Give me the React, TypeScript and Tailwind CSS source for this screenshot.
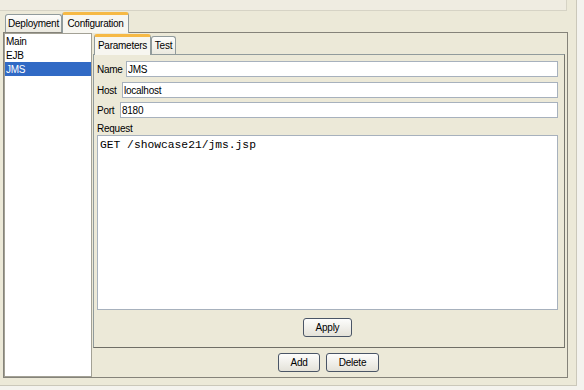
const Tab = ({
  label,
  selected,
  className = "",
}: {
  label: string;
  selected?: boolean;
  className?: string;
}) =>
  selected ? (
    <div
      className={`relative z-10 -mb-px flex h-[21px] items-center justify-center rounded-t-[3px] border-x border-t-[3px] border-x-[#919b9c] border-t-[#f6b945] bg-[#f7f6f0] px-[5px] pb-[2px] ${className}`}
    >
      {label}
    </div>
  ) : (
    <div
      className={`flex h-[18px] items-center justify-center rounded-t-[3px] border border-b-0 border-[#919b9c] bg-gradient-to-b from-[#fdfdfb] to-[#ebe9df] px-[4px] ${className}`}
    >
      {label}
    </div>
  );

const Button = ({ label, className = "" }: { label: string; className?: string }) => (
  <button
    className={`flex h-[19px] items-center justify-center rounded-[3px] border border-[#4a5566] bg-gradient-to-b from-[#fdfdfc] to-[#e4e2d9] ${className}`}
  >
    {label}
  </button>
);

const Field = ({
  label,
  value,
  labelWidth,
  className = "",
}: {
  label: string;
  value: string;
  labelWidth: string;
  className?: string;
}) => (
  <div className={`flex h-[16px] items-center ${className}`}>
    <span className={labelWidth}>{label}</span>
    <input
      readOnly
      value={value}
      className="h-[16px] flex-1 border border-[#a7b1bd] bg-white px-px text-[10px] tracking-[-0.25px] outline-none"
    />
  </div>
);

const items = ["Main", "EJB", "JMS"];

export default function App() {
  return (
    <div className="h-[390px] w-[584px] overflow-hidden bg-[#f4f3ee] font-['Liberation_Sans',Arial,sans-serif] text-[10px] tracking-[-0.25px] text-black">
      <div className="flex h-[386px] w-[577px] flex-col border-r border-b border-[#cbc8ba] bg-[#ece9d8]">
        <div className="h-[11px] w-[567px] shrink-0 border-r border-b border-[#d6d3c5] bg-[#efece1]" />

        <div className="flex h-[21px] shrink-0 items-end pl-[5px]">
          <Tab label="Deployment" className="w-[57px]" />
          <Tab label="Configuration" selected className="w-[67px]" />
        </div>

        <div className="ml-[3px] flex h-[346px] w-[565px] shrink-0 border border-[#85837a]">
          <div className="flex w-[88px] flex-col border border-[#a3a195] bg-white">
            {items.map((item) => (
              <div
                key={item}
                className={`flex h-[14px] items-center px-px ${
                  item === "JMS" ? "bg-[#316ac5] text-white" : ""
                }`}
              >
                {item}
              </div>
            ))}
          </div>

          <div className="flex flex-1 flex-col">
            <div className="flex h-[21px] shrink-0 items-end pl-[2px]">
              <Tab label="Parameters" selected className="w-[57px]" />
              <Tab label="Test" className="w-[25px]" />
            </div>

            <div className="ml-px flex h-[294px] w-[472px] shrink-0 flex-col border border-[#919b9c] border-r-[#77766e] border-b-[#6f6e66] pt-[6px] pr-[6px] pl-[3px]">
              <Field label="Name" value="JMS" labelWidth="w-[29px]" />
              <Field label="Host" value="localhost" labelWidth="w-[25px]" className="mt-[5px]" />
              <Field label="Port" value="8180" labelWidth="w-[23px]" className="mt-[4px]" />
              <div className="mt-[5px] h-[11px] leading-[11px]">Request</div>
              <textarea
                readOnly
                value="GET /showcase21/jms.jsp"
                className="mt-[1px] h-[175px] resize-none border border-[#a7b1bd] bg-white px-[2px] pt-[3px] font-['Liberation_Mono','Courier_New',monospace] text-[11.3px] leading-[13px] tracking-normal outline-none"
              />
              <div className="mt-[8px] flex justify-center">
                <Button label="Apply" className="w-[49px]" />
              </div>
            </div>

            <div className="flex flex-1 justify-center gap-[6px] pt-[5px] pr-[2px]">
              <Button label="Add" className="w-[42px]" />
              <Button label="Delete" className="w-[53px]" />
            </div>
          </div>
        </div>
      </div>
    </div>
  );
}
